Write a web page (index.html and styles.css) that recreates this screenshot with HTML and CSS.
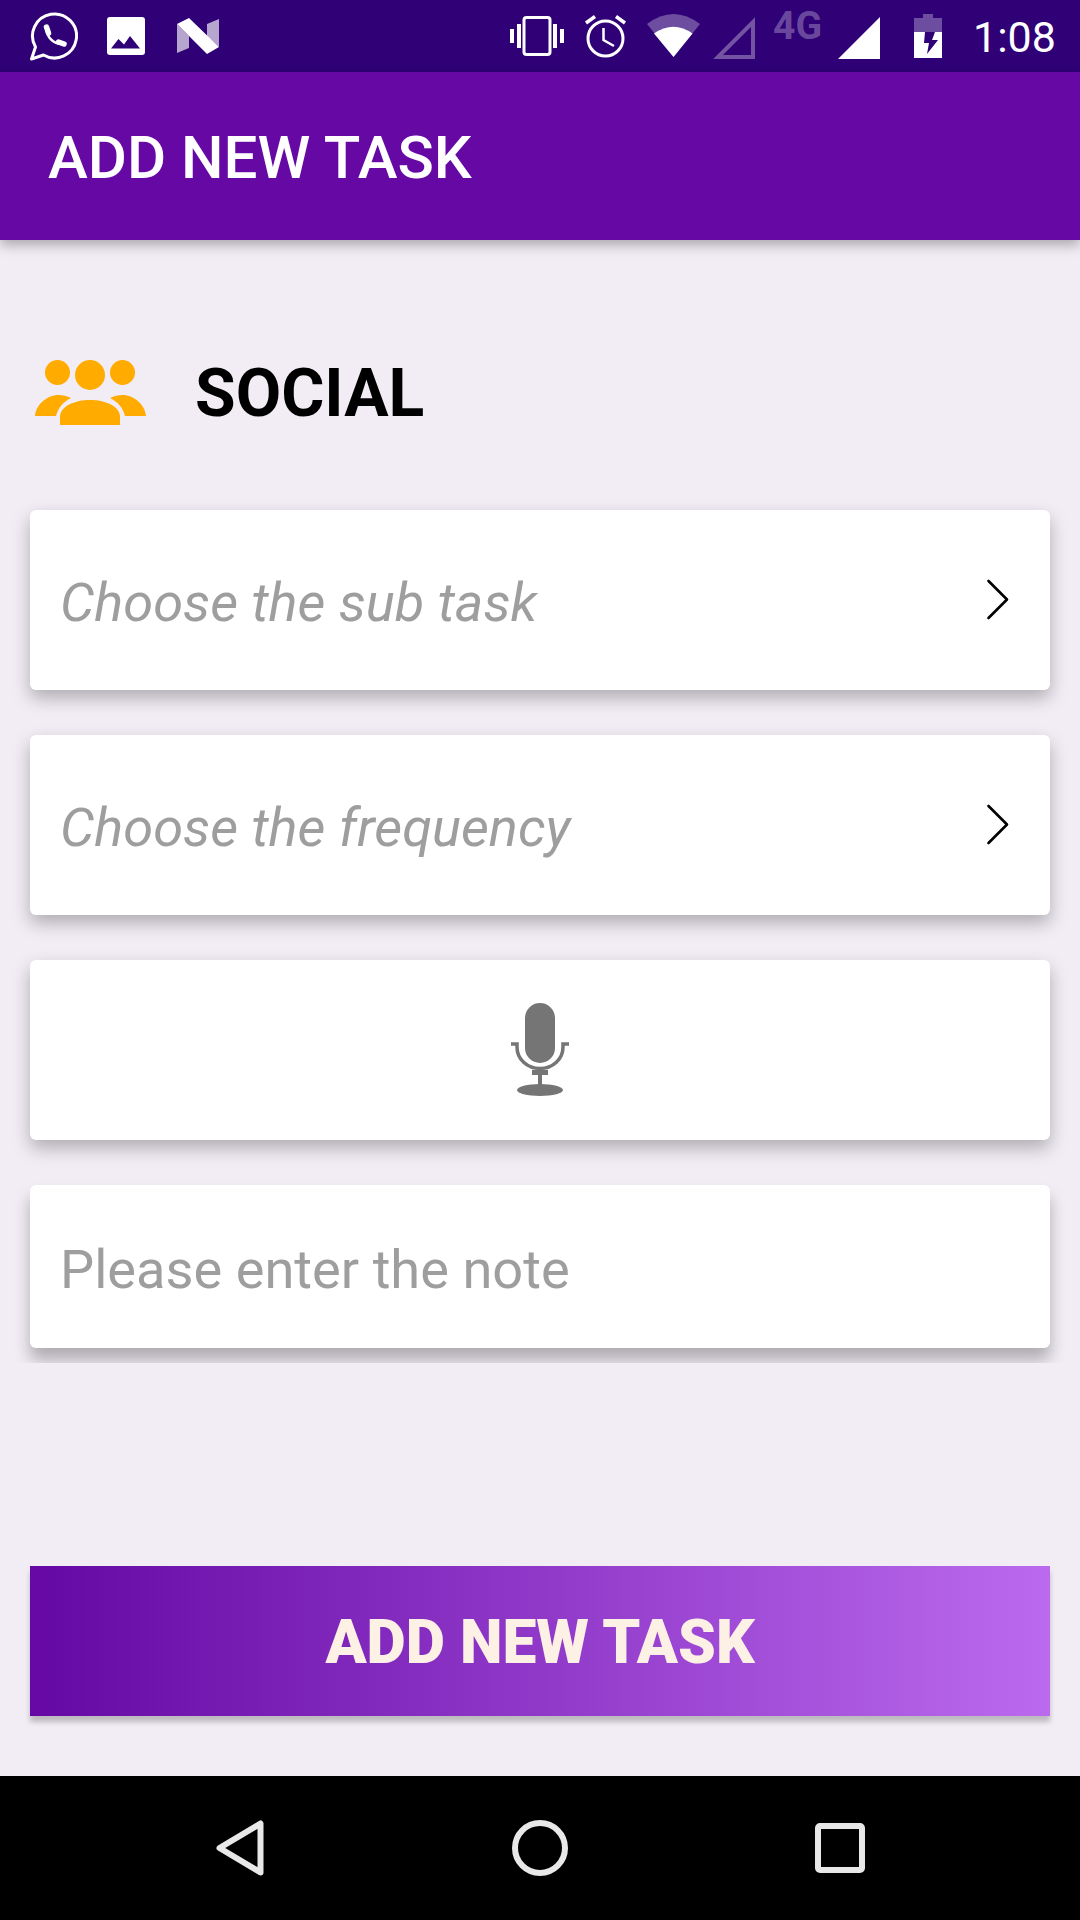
FILE: index.html
```html
<!DOCTYPE html>
<html>
<head>
<meta http-equiv="Content-Type" content="text/html; charset=utf-8"/>
<title>Add new task</title>
<link rel="stylesheet" href="styles.css">
</head>
<body>

<div class="status">
  <div class="status-left">
    <svg class="ic" width="48" viewBox="30 0 48 72">
      <path d="M31.500 59 L35.500 47 A22 22 0 1 1 43.500 55 Z" fill="none" stroke="#fff" stroke-width="3" stroke-linejoin="round"/>
      <path d="M46.500 29.500 C47 37 53 43.500 61 44" fill="none" stroke="#fff" stroke-width="2.600"/>
      <path d="M46.500 27 L48.500 33 M58.500 42 L64 44" fill="none" stroke="#fff" stroke-width="5.500" stroke-linecap="round"/>
    </svg>
    <svg class="ic" width="38" viewBox="107 0 38 72">
      <rect x="107" y="17" width="38" height="38" rx="3" fill="#fff"/>
      <path d="M111 48.500 L118.500 39 L124 44.500 L130 36 L140 48.500 Z" fill="#2f0076"/>
    </svg>
    <svg class="ic gap-n" width="42" viewBox="177 0 42 72">
      <path d="M177 24 L189 36 V48 L177 53 Z M207 24 L219 19 V47 L207 36 Z" fill="#fff" opacity=".65"/>
      <path d="M177 24 L189 18 L219 47 L207 54 Z" fill="#fff"/>
    </svg>
  </div>
  <div class="status-right">
    <svg class="ic" width="55" viewBox="510 0 55 72">
      <rect x="524" y="17.500" width="26" height="37" rx="2.500" fill="none" stroke="#fff" stroke-width="3"/>
      <path d="M510 29 h4 v14 h-4 Z M517 24 h4 v24 h-4 Z M553 24 h4 v24 h-4 Z M560 29 h4 v14 h-4 Z" fill="#fff"/>
    </svg>
    <svg class="ic gap-alarm" width="43" viewBox="584 0 43 72">
      <circle cx="605.500" cy="38.500" r="17.500" fill="none" stroke="#fff" stroke-width="3"/>
      <path d="M586 23 L595 16.500 M625 23 L616 16.500" stroke="#fff" stroke-width="3.500"/>
      <path d="M603.500 28 V40 L614 46" fill="none" stroke="#fff" stroke-width="2.500"/>
    </svg>
    <svg class="ic gap-wifi" width="53" viewBox="647 0 53 72">
      <path d="M673.500 57 L647 24 Q673.500 4 700 24 Z" fill="#fff" opacity=".3"/>
      <path d="M673.500 57 L654 33.500 Q673.500 20 692.500 33.500 Z" fill="#fff"/>
    </svg>
    <svg class="ic gap-cell" width="43" viewBox="712 0 43 72">
      <path d="M718 57 L753 22 V57 Z" fill="none" stroke="#fff" stroke-width="4" opacity=".33"/>
    </svg>
    <span class="net">4G</span>
    <svg class="ic gap-signal" width="42" viewBox="838 0 42 72">
      <path d="M838 59 L880 17 V59 Z" fill="#fff"/>
    </svg>
    <svg class="ic gap-batt" width="28" viewBox="914 0 28 72">
      <path d="M923 14 h10 v4 h9 v14 h-28 v-14 h9 Z" fill="#fff" opacity=".3"/>
      <path d="M914 32 h28 v26 h-28 Z" fill="#fff"/>
      <path d="M925 32 h10 l-3 8 h6 l-11 14 l2 -11 h-5 Z" fill="#2f0076"/>
    </svg>
    <span class="clock">1:08</span>
  </div>
</div>

<div class="appbar">ADD NEW TASK</div>

<div class="form">
  <div class="category">
    <svg class="category-icon" width="111" height="65" viewBox="35 360 111 65">
      <circle cx="57.500" cy="372.500" r="12.500"/>
      <circle cx="90" cy="375" r="15"/>
      <circle cx="122.500" cy="372.500" r="12.500"/>
      <path d="M60 425 V416 C61 406 75 400 90 400 C105 400 119 406 120 416 V425 Z"/>
      <path d="M35 416 C36 404 48 395 58 395 C63 395 67 396 71 398 C63 402 58 408 56 416 Z"/>
      <path d="M146 416 C145 404 133 395 123 395 C118 395 114 396 110 398 C118 402 123 408 125 416 Z"/>
    </svg>
    <span class="category-name">SOCIAL</span>
  </div>

  <div class="card card-pick">
    <span class="hint">Choose the sub task</span>
    <svg class="chevron" width="24" height="42" viewBox="0 0 24 42"><path d="M2.500 2 L21 20.500 L2.500 39" fill="none" stroke="#000" stroke-width="2.600" stroke-linecap="round" stroke-linejoin="round"/></svg>
  </div>
  <div class="card card-pick">
    <span class="hint">Choose the frequency</span>
    <svg class="chevron" width="24" height="42" viewBox="0 0 24 42"><path d="M2.500 2 L21 20.500 L2.500 39" fill="none" stroke="#000" stroke-width="2.600" stroke-linecap="round" stroke-linejoin="round"/></svg>
  </div>
  <div class="card card-mic">
    <svg width="60" height="96" viewBox="510 1002 60 96">
      <rect x="525" y="1003" width="30" height="60" rx="15" fill="#757575"/>
      <path d="M511 1044 h6 V1047 C517 1059 527 1068.500 540 1068.500 C553 1068.500 563 1059 563 1047 V1044 H569" fill="none" stroke="#757575" stroke-width="3.500"/>
      <path d="M532 1070 h16 v5 h-6 v10 h-4 v-10 h-6 Z" fill="#757575"/>
      <ellipse cx="540" cy="1090" rx="23" ry="6" fill="#757575"/>
    </svg>
  </div>
  <div class="card card-note">
    <span class="note">Please enter the note</span>
  </div>
</div>

<div class="actions">
  <div class="add-btn">ADD NEW TASK</div>
</div>

<div class="navbar">
  <svg class="nav-back" width="48" height="56" viewBox="0 0 48 56"><path d="M44.500 3.500 V52.500 L3.500 28 Z" fill="none" stroke="#e8e8e8" stroke-width="6" stroke-linejoin="round"/></svg>
  <svg class="nav-home" width="56" height="56" viewBox="0 0 56 56"><circle cx="28" cy="28" r="25" fill="none" stroke="#e8e8e8" stroke-width="6"/></svg>
  <svg class="nav-recent" width="50" height="50" viewBox="0 0 50 50"><rect x="3" y="3" width="44" height="44" rx="2" fill="none" stroke="#e8e8e8" stroke-width="6"/></svg>
</div>

</body>
</html>
```

FILE: styles.css
```css
html, body {
  margin: 0;
  padding: 0;
}

body {
  width: 1080px;
  height: 1920px;
  display: flex;
  flex-direction: column;
  overflow: hidden;
  background-color: #f2edf5;
  font-family: Roboto, sans-serif;
}

.status {
  height: 72px;
  flex: none;
  display: flex;
  justify-content: space-between;
  background-color: #2f0076;
  color: #fff;
}

.status-left {
  display: flex;
  gap: 29px;
  padding-left: 30px;
}

.status-right {
  display: flex;
  align-items: flex-start;
  padding-right: 25px;
}

.ic {
  height: 72px;
  flex: none;
}

.gap-n { margin-left: 3px; }
.gap-alarm { margin-left: 19px; }
.gap-wifi { margin-left: 20px; }
.gap-cell { margin-left: 12px; }
.gap-signal { margin-left: 16px; }
.gap-batt { margin-left: 34px; }

.net {
  margin-left: 18px;
  width: 49px;
  font-size: 39px;
  font-weight: 700;
  line-height: 52px;
  color: rgba(255, 255, 255, .3);
}

.clock {
  margin-left: 31px;
  width: 82px;
  font-size: 43px;
  line-height: 74px;
}

.appbar {
  height: 168px;
  flex: none;
  box-sizing: border-box;
  position: relative;
  z-index: 1;
  display: flex;
  align-items: center;
  padding: 2px 0 0 48px;
  background-color: #6508a4;
  box-shadow: 0 5px 12px rgba(0, 0, 0, .3);
  color: #fff;
  font-size: 60px;
  font-weight: 500;
}

.form {
  height: 1123px;
  flex: none;
  box-sizing: border-box;
  overflow: hidden;
  padding: 120px 30px 0;
  display: flex;
  flex-direction: column;
  gap: 45px;
}

.category {
  height: 65px;
  display: flex;
  align-items: center;
  gap: 49px;
  margin: 0 0 40px 5px;
}

.category-icon {
  fill: #ffab00;
  flex: none;
}

.category-name {
  padding-top: 2px;
  font-size: 66px;
  font-weight: 700;
  color: #000;
}

.card {
  flex: none;
  display: flex;
  align-items: center;
  height: 180px;
  box-sizing: border-box;
  padding: 0 30px;
  border-radius: 6px;
  background-color: #fff;
  box-shadow: 0 8px 18px rgba(0, 0, 0, .28);
}

.card-pick {
  justify-content: space-between;
}

.card-mic {
  justify-content: center;
}

.card-note {
  height: 163px;
  box-shadow: 0 12px 16px rgba(0, 0, 0, .28);
}

.hint {
  padding-top: 4px;
  font-size: 54.2px;
  font-style: italic;
  color: #9e9e9e;
}

.chevron {
  margin-right: 10px;
}

.note {
  padding-top: 6px;
  font-size: 54.2px;
  color: #9e9e9e;
}

.actions {
  flex: 1;
  padding: 203px 30px 0;
}

.add-btn {
  height: 150px;
  box-sizing: border-box;
  padding-top: 2px;
  display: flex;
  align-items: center;
  justify-content: center;
  background: linear-gradient(to right, #6508a4, #bb6aee);
  box-shadow: 0 6px 5px rgba(0, 0, 0, .22);
  color: #fdf0e4;
  font-size: 60.5px;
  font-weight: 900;
}

.navbar {
  height: 144px;
  flex: none;
  display: flex;
  align-items: center;
  padding-left: 216px;
  background-color: #000;
}

.nav-home {
  margin-left: 248px;
}

.nav-recent {
  margin-left: 247px;
}
```
